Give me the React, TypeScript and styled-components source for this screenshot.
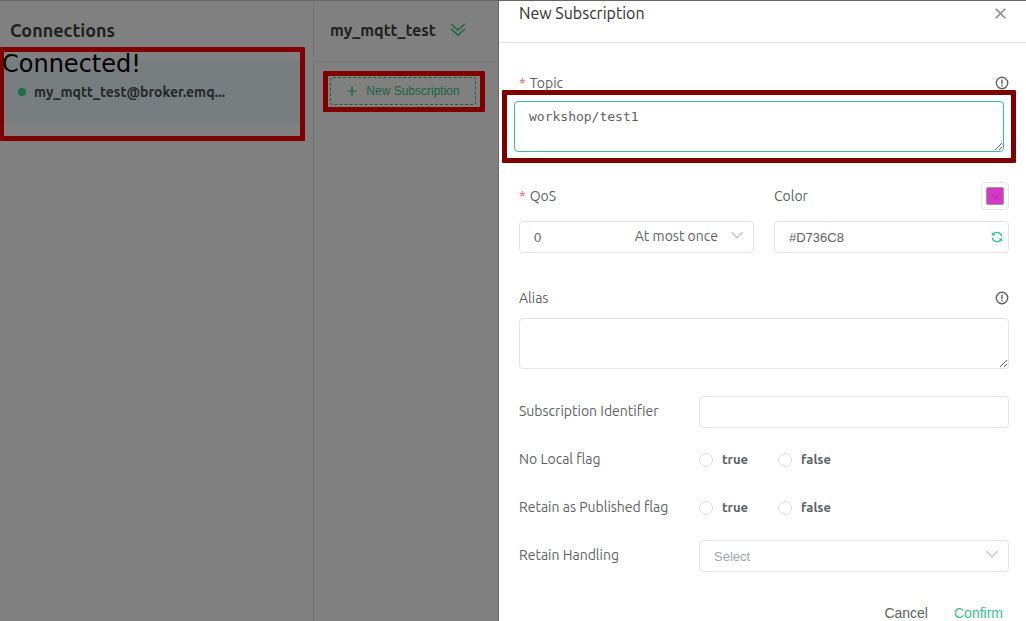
import React from "react";
import styled, { createGlobalStyle } from "styled-components";

const ui = `"Ubuntu", "Noto Sans", sans-serif`;
const arial = `"Liberation Sans", Arial, sans-serif`;
const line = "#e4e2f0";
const ink = "#606266";
const green = "#34c388";
const marker = "#800000";

const GlobalStyle = createGlobalStyle`
  *, *::before, *::after { box-sizing: border-box; }
  body { margin: 0; font-family: ${ui}; color: ${ink}; background: #808080; }
  button, input, select, textarea { font: inherit; color: inherit; margin: 0; outline: none; }
  button { border: 0; padding: 0; background: none; cursor: pointer; }
  svg { display: block; }
`;

const Page = styled.div`
  display: grid;
  grid-template-columns: 314px 185px minmax(0, 1fr);
  min-height: 100vh;
  border-top: 1px solid #666;
`;

const Connections = styled.nav`
  border-right: 1px solid #76767b;
`;

const PaneTitle = styled.h1<{ $small?: boolean }>`
  margin: 0;
  padding: 0 10px;
  font-size: ${(p) => (p.$small ? 16 : 18)}px;
  line-height: 24px;
  font-weight: 700;
  color: #1e1f20;
`;

const ConnectionsHead = styled.header`
  height: 46px;
  padding-top: 17px;
`;

const ConnectionMark = styled.div`
  position: relative;
  width: 305px;
  height: 94px;
  padding-top: 8px;
  border: 5px solid ${marker};
  border-left-width: 4px;
  border-radius: 1px;
`;

const ConnectedNote = styled.span`
  position: absolute;
  left: -2px;
  top: 0;
  font-family: "DejaVu Sans", sans-serif;
  font-size: 24px;
  line-height: 24px;
  color: #000;
`;

const ConnectionCard = styled.a`
  display: flex;
  align-items: center;
  gap: 8px;
  height: 64px;
  padding-left: 14px;
  border-radius: 8px 0 0 8px;
  background: #787d80;
  color: #252728;
  font-size: 14px;
  font-weight: 600;
  text-decoration: none;
`;

const StatusDot = styled.i`
  width: 8px;
  height: 8px;
  border-radius: 50%;
  background: #1a7048;
`;

const Subscriptions = styled.section`
  border-right: 1px solid #68686a;
`;

const SubscriptionsHead = styled.header`
  display: flex;
  align-items: flex-start;
  height: 61px;
  padding: 17px 0 0 6px;
  border-bottom: 1px solid #727278;

  svg { margin: 4px; }
`;

const SubscribeMark = styled.div`
  width: 162px;
  margin: 9px 0 0 9px;
  padding: 1px 4px 2px 2px;
  border: 5px solid ${marker};
  border-radius: 1px;
`;

const SubscribeButton = styled.button`
  display: flex;
  align-items: center;
  justify-content: center;
  gap: 8px;
  width: 100%;
  height: 28px;
  border: 1px dashed #1a6244;
  border-radius: 3px;
  font-family: ${arial};
  font-size: 12px;
  color: #1a6244;
`;

const Drawer = styled.aside`
  background: #fff;
`;

const DrawerHead = styled.header`
  display: flex;
  justify-content: space-between;
  height: 42px;
  padding: 0 20px;
  border-bottom: 1px solid ${line};
`;

const DrawerTitle = styled.h2`
  margin: 0;
  font-size: 16px;
  font-weight: 400;
  line-height: 24px;
  color: #303133;
`;

const CloseButton = styled.button`
  height: 24px;
  color: #8b8d93;
`;

const Form = styled.form`
  padding: 32px 17px 0 20px;
`;

const LabelRow = styled.div<{ $tall?: boolean }>`
  display: flex;
  align-items: center;
  justify-content: space-between;
  height: ${(p) => (p.$tall ? 28 : 16)}px;
`;

const Label = styled.label<{ $required?: boolean }>`
  font-size: 14px;
  line-height: 16px;
  ${(p) => p.$required && `&::before { content: "*"; margin-right: 4px; color: #f56c6c; }`}
`;

const Hint = styled.button`
  color: #606266;
`;

const TopicMark = styled.div`
  margin: -1px -7px 0 -17px;
  padding: 6px 7px;
  border: 5px solid ${marker};
  border-radius: 1px;
`;

const TextArea = styled.textarea<{ $active?: boolean }>`
  display: block;
  width: 100%;
  height: 51px;
  padding: 5px 14px;
  border: 1px solid ${(p) => (p.$active ? green : line)};
  border-radius: 4px;
  background: #fff;
  font-family: "DejaVu Sans Mono", monospace;
  font-size: 13px;
  line-height: 20px;
  resize: vertical;
`;

const Pair = styled.div`
  display: grid;
  grid-template-columns: 1fr 1fr;
  gap: 20px;
  margin: 19px 0 37px;
`;

const ControlBox = styled.div<{ $end?: number }>`
  display: flex;
  align-items: center;
  height: 32px;
  padding-right: ${(p) => p.$end ?? 0}px;
  border: 1px solid ${line};
  border-radius: 4px;
  background: #fff;
  font-family: ${arial};
  font-size: 13px;
`;

const StackedBox = styled(ControlBox)`
  margin-top: 11px;
`;

const TextInput = styled.input`
  flex: 1;
  min-width: 0;
  height: 100%;
  padding: 0 14px;
  border: 0;
  background: none;
`;

const Picker = styled.select<{ $empty?: boolean }>`
  flex: 1;
  min-width: 0;
  height: 100%;
  padding: 0 14px;
  border: 0;
  background: none;
  appearance: none;
  color: ${(p) => (p.$empty ? "#a2a5ad" : ink)};
`;

const PickerNote = styled.span`
  margin-right: 12px;
  padding-bottom: 2px;
  font-family: ${ui};
  font-size: 14px;
`;

const PickerArrow = styled.span`
  padding-bottom: 4px;
`;

const Swatch = styled.button`
  width: 28px;
  height: 28px;
  padding: 4px;
  border: 1px solid #e6e6e6;
  border-radius: 4px;
`;

const SwatchFill = styled.span`
  display: grid;
  place-items: center;
  height: 18px;
  border: 1px solid #999;
  border-radius: 2px;
  background: #d736c8;
`;

const AliasArea = styled.div`
  padding-top: 12px;
`;

const Properties = styled.div`
  display: grid;
  gap: 16px;
  margin-top: 27px;
`;

const PropertyRow = styled.div`
  display: grid;
  grid-template-columns: 180px minmax(0, 1fr);
  align-items: center;
  min-height: 32px;

  & > ${Label} { padding-bottom: 2px; }
`;

const Radios = styled.div`
  display: flex;
  gap: 30px;
`;

const RadioLabel = styled.label`
  display: flex;
  align-items: center;
  gap: 9px;
  font-size: 13px;
  line-height: 16px;
  font-weight: 600;

  span { padding-bottom: 2px; }
`;

const Radio = styled.input`
  appearance: none;
  width: 14px;
  height: 14px;
  border: 1px solid #dcdce8;
  border-radius: 50%;
  background: #fff;
  &:checked { border: 4px solid ${green}; }
`;

const Footer = styled.footer`
  display: flex;
  justify-content: flex-end;
  gap: 26px;
  margin-top: 33px;
  padding-right: 6px;
`;

const TextButton = styled.button<{ $primary?: boolean }>`
  font-family: ${arial};
  font-size: 14px;
  line-height: 16px;
  color: ${(p) => (p.$primary ? green : ink)};
`;

const Chevron = ({ size = 14, color = "#c0c2cc" }: { size?: number; color?: string }) => (
  <svg width={size} height={size} viewBox="0 0 14 14" fill="none" stroke={color} strokeWidth="1.3">
    <path d="M1.6 4.2 7 9.8l5.4-5.6" />
  </svg>
);

const WarningIcon = () => (
  <svg width="14" height="14" viewBox="0 0 14 14" fill="none" stroke="currentColor" strokeWidth="1.4">
    <circle cx="7" cy="7" r="5.7" />
    <path d="M7 3.5v4.7M7 9v1.4" />
  </svg>
);

const RefreshIcon = () => (
  <svg width="12" height="12" viewBox="0 0 12 12" fill="none" stroke={green} strokeWidth="1.3">
    <path d="M2.2 3.4A4.7 4.7 0 0 1 10.7 5.4M9.8 8.6A4.7 4.7 0 0 1 1.3 6.6" />
    <path d="M.8 1v3.6h3.6zM11.2 11V7.4H7.6z" fill={green} stroke="none" />
  </svg>
);

function Flag({ name, title }: { name: string; title: string }) {
  return (
    <PropertyRow role="radiogroup" aria-labelledby={name}>
      <Label as="span" id={name}>{title}</Label>
      <Radios>
        {["true", "false"].map((value) => (
          <RadioLabel key={value}>
            <Radio type="radio" name={name} value={value} />
            <span>{value}</span>
          </RadioLabel>
        ))}
      </Radios>
    </PropertyRow>
  );
}

export default function App() {
  return (
    <>
      <GlobalStyle />
      <Page>
        <Connections>
          <ConnectionsHead>
            <PaneTitle>Connections</PaneTitle>
          </ConnectionsHead>
          <ConnectionMark>
            <ConnectionCard href="#connection">
              <StatusDot />
              my_mqtt_test@broker.emq...
            </ConnectionCard>
            <ConnectedNote>Connected!</ConnectedNote>
          </ConnectionMark>
        </Connections>

        <Subscriptions>
          <SubscriptionsHead>
            <PaneTitle as="h2" $small>my_mqtt_test</PaneTitle>
            <svg width="16" height="16" viewBox="0 0 16 16" fill="none" stroke="#1a6b48" strokeWidth="1.6">
              <path d="M1.2 2 8 8.2 14.8 2M1.2 7 8 13.2 14.8 7" />
            </svg>
          </SubscriptionsHead>
          <SubscribeMark>
            <SubscribeButton type="button">
              <svg width="12" height="12" viewBox="0 0 12 12" stroke="currentColor" strokeWidth="1.2">
                <path d="M6 1v10M1 6h10" />
              </svg>
              New Subscription
            </SubscribeButton>
          </SubscribeMark>
        </Subscriptions>

        <Drawer>
          <DrawerHead>
            <DrawerTitle>New Subscription</DrawerTitle>
            <CloseButton type="button" aria-label="Close">
              <svg width="11" height="11" viewBox="0 0 11 11" stroke="currentColor" strokeWidth="1.6">
                <path d="m.7.7 9.6 9.6M10.3.7.7 10.3" />
              </svg>
            </CloseButton>
          </DrawerHead>
          <Form onSubmit={(e) => e.preventDefault()}>
            <LabelRow>
              <Label htmlFor="topic" $required>Topic</Label>
              <Hint type="button" aria-label="About topics"><WarningIcon /></Hint>
            </LabelRow>
            <TopicMark>
              <TextArea id="topic" $active defaultValue="workshop/test1" spellCheck={false} />
            </TopicMark>

            <Pair>
              <div>
                <LabelRow $tall>
                  <Label htmlFor="qos" $required>QoS</Label>
                </LabelRow>
                <StackedBox $end={9}>
                  <Picker id="qos" defaultValue="0">
                    <option>0</option>
                    <option>1</option>
                    <option>2</option>
                  </Picker>
                  <PickerNote>At most once</PickerNote>
                  <PickerArrow><Chevron /></PickerArrow>
                </StackedBox>
              </div>
              <div>
                <LabelRow $tall>
                  <Label htmlFor="color">Color</Label>
                  <Swatch type="button" aria-label="Pick a color">
                    <SwatchFill><Chevron size={9} color="#70456c" /></SwatchFill>
                  </Swatch>
                </LabelRow>
                <StackedBox $end={5}>
                  <TextInput id="color" defaultValue="#D736C8" />
                  <button type="button" aria-label="Random color"><RefreshIcon /></button>
                </StackedBox>
              </div>
            </Pair>

            <LabelRow>
              <Label htmlFor="alias">Alias</Label>
              <Hint type="button" aria-label="About aliases"><WarningIcon /></Hint>
            </LabelRow>
            <AliasArea>
              <TextArea id="alias" />
            </AliasArea>

            <Properties>
              <PropertyRow>
                <Label htmlFor="identifier">Subscription Identifier</Label>
                <ControlBox><TextInput id="identifier" /></ControlBox>
              </PropertyRow>
              <Flag name="no-local" title="No Local flag" />
              <Flag name="retain-published" title="Retain as Published flag" />
              <PropertyRow>
                <Label htmlFor="handling">Retain Handling</Label>
                <ControlBox $end={9}>
                  <Picker id="handling" $empty defaultValue="">
                    <option value="">Select</option>
                    <option>0</option>
                    <option>1</option>
                    <option>2</option>
                  </Picker>
                  <PickerArrow><Chevron /></PickerArrow>
                </ControlBox>
              </PropertyRow>
            </Properties>

            <Footer>
              <TextButton type="button">Cancel</TextButton>
              <TextButton type="submit" $primary>Confirm</TextButton>
            </Footer>
          </Form>
        </Drawer>
      </Page>
    </>
  );
}
